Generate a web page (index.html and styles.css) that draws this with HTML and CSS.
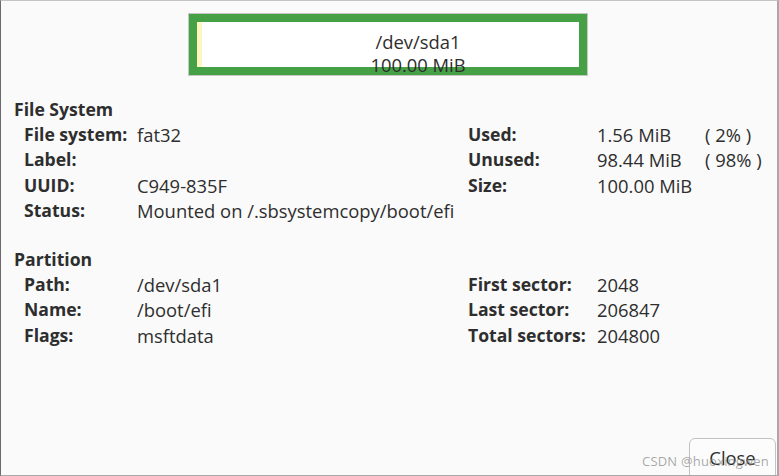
FILE: index.html
```html
<!DOCTYPE html>
<html>
<head>
<meta charset="utf-8">
<link rel="stylesheet" href="styles.css">
</head>
<body>
<div class="window">
  <div class="bar-row">
    <div class="bar">
      <div class="bar-green">
        <div class="bar-inner">
          <div class="used"></div>
          <div class="bar-text">
            <div>/dev/sda1</div>
            <div>100.00 MiB</div>
          </div>
        </div>
      </div>
    </div>
  </div>

  <div class="section first">
    <div class="head">File System</div>
    <div class="grid">
      <div class="lbl">File system:</div><div>fat32</div><div class="lbl">Used:</div><div>1.56 MiB</div><div>( 2% )</div>
      <div class="lbl">Label:</div><div></div><div class="lbl">Unused:</div><div>98.44 MiB</div><div>( 98% )</div>
      <div class="lbl">UUID:</div><div>C949-835F</div><div class="lbl">Size:</div><div>100.00 MiB</div><div></div>
      <div class="lbl">Status:</div><div class="nowrap">Mounted on /.sbsystemcopy/boot/efi</div><div></div><div></div><div></div>
    </div>
  </div>

  <div class="section second">
    <div class="head">Partition</div>
    <div class="grid">
      <div class="lbl">Path:</div><div>/dev/sda1</div><div class="lbl">First sector:</div><div>2048</div><div></div>
      <div class="lbl">Name:</div><div>/boot/efi</div><div class="lbl">Last sector:</div><div>206847</div><div></div>
      <div class="lbl">Flags:</div><div>msftdata</div><div class="lbl nowrap">Total sectors:</div><div>204800</div><div></div>
    </div>
  </div>

  <div class="footer">
    <button class="close">Close</button>
  </div>
  <div class="watermark">CSDN @huoxingwen</div>
</div>
</body>
</html>
```
FILE: styles.css
```css
html, body {
  margin: 0;
  padding: 0;
  background: #fafafa;
}
.window {
  position: relative;
  box-sizing: border-box;
  width: 779px;
  height: 476px;
  overflow: hidden;
  background: #fafafa;
  border-left: 1px solid #6b6b6b;
  border-top: 1px solid #c4c4c4;
  border-right: 2px solid #a8a8a8;
  border-bottom: 1px solid #a8a8a8;
  display: flex;
  flex-direction: column;
  font-family: "Open Sans", "Noto Sans", sans-serif;
  font-size: 18.4px;
  color: #2e2e2e;
}
.bar-row {
  padding-top: 12px;
  padding-left: 187px;
}
.bar {
  width: 398px;
  height: 61px;
  border: 1px solid #c6c6c6;
}
.bar-green {
  box-sizing: border-box;
  height: 100%;
  border: 8px solid #46a046;
  background: #fff;
}
.bar-inner {
  display: flex;
  height: 100%;
}
.used {
  width: 5px;
  background: #fbf8c0;
  flex: none;
}
.bar-text {
  flex: 1;
  padding-top: 8px;
  padding-left: 55px;
  text-align: center;
  line-height: 23px;
  white-space: nowrap;
}
.section {
  padding-left: 13px;
  line-height: 25px;
}
.section.first {
  margin-top: 21px;
}
.section.second {
  margin-top: 24px;
}
.head {
  font-weight: 700;
  font-size: 17.6px;
}
.grid {
  display: grid;
  padding-left: 10px;
  grid-template-columns: 113px 331px 129px 108px auto;
  grid-auto-rows: 25.3px;
}
.lbl {
  font-weight: 700;
  font-size: 17.6px;
}
.nowrap {
  white-space: nowrap;
}
.footer {
  margin-top: auto;
  display: flex;
  justify-content: flex-end;
  padding-right: 1px;
}
.close {
  width: 87px;
  height: 42px;
  margin-bottom: -5px;
  border: 1px solid #c2c2c2;
  border-radius: 6px;
  background: #fcfcfc;
  font-family: "Open Sans", "Noto Sans", sans-serif;
  font-size: 18.4px;
  color: #2e2e2e;
  padding: 0 0 4px 0;
}
.watermark {
  position: absolute;
  right: 8px;
  bottom: 5px;
  font-family: "Open Sans", "Noto Sans", sans-serif;
  font-size: 13px;
  color: rgba(140, 140, 140, 0.75);
  letter-spacing: 0.2px;
}
```
